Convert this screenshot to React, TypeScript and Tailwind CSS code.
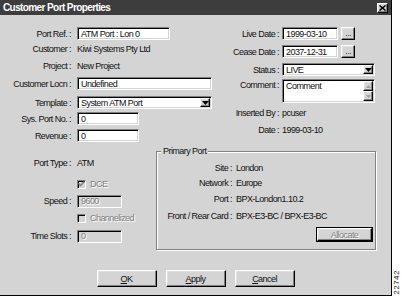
import React from "react";

const sunken =
  "border border-t-[#808080] border-l-[#808080] border-r-white border-b-white shadow-[inset_1px_1px_0_#000,inset_-1px_-1px_0_#d4d4d4]";
const raised =
  "border border-t-white border-l-white border-r-black border-b-black shadow-[inset_-1px_-1px_0_#808080,inset_1px_1px_0_#dfdfdf]";
const dim = "text-[#808080] [text-shadow:1px_1px_0_#fff]";

const Down = () => (
  <svg width="7" height="4" viewBox="0 0 7 4">
    <path d="M0 0h7L3.5 4z" fill="#000" />
  </svg>
);

const Field = ({ w, value, disabled }: any) => (
  <div
    className={`h-[13px] ${w} ${sunken} ${
      disabled ? "bg-[#d4d4d4] " + dim : "bg-white"
    } flex items-center pl-[3px] overflow-hidden whitespace-nowrap`}
  >
    {value}
  </div>
);

const Select = ({ w, value }: any) => (
  <div className={`h-[13px] ${w} ${sunken} bg-white flex items-stretch p-[1px]`}>
    <span className="flex-1 flex items-center pl-[2px]">{value}</span>
    <span className={`w-[10px] ${raised} bg-[#d4d4d4] flex items-center justify-center`}>
      <Down />
    </span>
  </div>
);

const Dots = () => (
  <div className={`h-[13px] w-[14px] ${raised} bg-[#d4d4d4] flex items-end justify-center gap-[1px] pb-[3px]`}>
    <span className="w-[1px] h-[1px] bg-[#505050]" />
    <span className="w-[1px] h-[1px] bg-[#505050]" />
    <span className="w-[1px] h-[1px] bg-[#505050]" />
  </div>
);

const Check = ({ checked, label }: any) => (
  <div className="flex items-center gap-[4px]">
    <span className={`w-[9px] h-[9px] ${sunken} bg-[#d4d4d4] flex items-center justify-center`}>
      {checked && (
        <svg width="7" height="6" viewBox="0 0 7 6">
          <path d="M0.5 2.5l2 2 4-4" stroke="#808080" strokeWidth="1.4" fill="none" />
        </svg>
      )}
    </span>
    <span className={dim}>{label}</span>
  </div>
);

const L = ({ w, children }: any) => (
  <span className={`${w} shrink-0 text-right whitespace-nowrap`}>{children}</span>
);

const Btn = ({ children }: any) => (
  <div className={`w-[60px] h-[17px] ${raised} bg-[#d4d4d4] flex items-center justify-center`}>
    {children}
  </div>
);

export default function App() {
  return (
    <div className="w-[402px] h-[298px] bg-white flex text-[#111] text-[9px] leading-[12px] tracking-[-0.55px] [font-family:'Liberation_Sans',Arial,sans-serif]">
      <div className="w-[392px] h-[296px] shrink-0 bg-[#d4d4d4] border-r border-b border-black flex flex-col">
        <div className="h-[15px] bg-[#3d3d3d] flex items-center justify-between pl-[3px] pr-[3px]">
          <span className="text-white font-bold text-[10px] tracking-[-0.6px]">Customer Port Properties</span>
          <span className={`w-[11px] h-[10px] ${raised} bg-[#d4d4d4] flex items-center justify-center`}>
            <svg width="7" height="6" viewBox="0 0 7 6">
              <path d="M0.5 0.5l6 5M6.5 0.5l-6 5" stroke="#000" strokeWidth="1.6" />
            </svg>
          </span>
        </div>

        <div className="flex mt-[12px]">
          <div className="w-[215px] shrink-0 flex flex-col">
            <div className="flex items-center gap-[6px] h-[13px]">
              <L w="w-[71px]">Port Ref. :</L>
              <Field w="w-[93px]" value="ATM Port : Lon 0" />
            </div>
            <div className="flex items-center gap-[6px] h-[13px] mt-[2px]">
              <L w="w-[71px]">Customer :</L>
              <span>Kiwi Systems Pty Ltd</span>
            </div>
            <div className="flex items-center gap-[6px] h-[13px] mt-[4px]">
              <L w="w-[71px]">Project :</L>
              <span>New Project</span>
            </div>
            <div className="flex items-center gap-[6px] h-[13px] mt-[5px]">
              <L w="w-[71px]">Customer Locn :</L>
              <Field w="w-[135px]" value="Undefined" />
            </div>
            <div className="flex items-center gap-[6px] h-[13px] mt-[6px]">
              <L w="w-[71px]">Template :</L>
              <Select w="w-[135px]" value="System ATM Port" />
            </div>
            <div className="flex items-center gap-[6px] h-[13px] mt-[3px]">
              <L w="w-[71px]">Sys. Port No. :</L>
              <Field w="w-[62px]" value="0" />
            </div>
            <div className="flex items-center gap-[6px] h-[13px] mt-[4px]">
              <L w="w-[71px]">Revenue :</L>
              <Field w="w-[62px]" value="0" />
            </div>
          </div>

          <div className="flex flex-col">
            <div className="flex items-center gap-[3px] h-[13px]">
              <L w="w-[64px]">Live Date :</L>
              <Field w="w-[56px]" value="1999-03-10" />
              <Dots />
            </div>
            <div className="flex items-center gap-[3px] h-[13px] mt-[5px]">
              <L w="w-[64px]">Cease Date :</L>
              <Field w="w-[56px]" value="2037-12-31" />
              <Dots />
            </div>
            <div className="flex items-center gap-[3px] h-[13px] mt-[5px]">
              <L w="w-[64px]">Status :</L>
              <Select w="w-[93px]" value="LIVE" />
            </div>
            <div className="flex items-start gap-[3px] mt-[3px]">
              <L w="w-[64px]">Comment :</L>
              <div className={`w-[93px] h-[24px] ${sunken} bg-white flex p-[1px]`}>
                <span className="flex-1 pl-[2px] leading-[11px]">Comment</span>
                <div className="w-[10px] flex flex-col">
                  {[0, 1].map((i) => (
                    <span key={i} className={`flex-1 ${raised} bg-[#d4d4d4] flex items-center justify-center`}>
                      <svg width="5" height="3" viewBox="0 0 5 3" className={i === 0 ? "rotate-180" : ""}>
                        <path d="M0 0h5L2.5 3z" fill="#a0a0a0" />
                      </svg>
                    </span>
                  ))}
                </div>
              </div>
            </div>
            <div className="flex items-center gap-[3px] h-[12px] mt-[4px]">
              <L w="w-[64px]">Inserted By :</L>
              <span>pcuser</span>
            </div>
            <div className="flex items-center gap-[3px] h-[12px] mt-[5px]">
              <L w="w-[64px]">Date :</L>
              <span>1999-03-10</span>
            </div>
          </div>
        </div>

        <div className="flex mt-[4px]">
          <div className="w-[156px] shrink-0 flex flex-col">
            <div className="flex items-center gap-[6px] h-[12px] mt-[11px]">
              <L w="w-[71px]">Port Type :</L>
              <span>ATM</span>
            </div>
            <div className="flex items-center h-[12px] mt-[9px] pl-[77px]">
              <Check checked label="DCE" />
            </div>
            <div className="flex items-center gap-[6px] h-[12px] mt-[5px]">
              <L w="w-[71px]">Speed :</L>
              <Field w="w-[45px]" value="9600" disabled />
            </div>
            <div className="flex items-center h-[12px] mt-[5px] pl-[77px]">
              <Check label="Channelized" />
            </div>
            <div className="flex items-center gap-[6px] h-[12px] mt-[6px]">
              <L w="w-[71px]">Time Slots :</L>
              <Field w="w-[45px]" value="0" disabled />
            </div>
          </div>

          <fieldset className="w-[220px] h-[104px] m-0 p-0 min-w-0 border border-[#808080] shadow-[inset_1px_1px_0_#fff,1px_1px_0_#fff] flex flex-col">
            <legend className="ml-[4px] px-[2px] bg-[#d4d4d4] leading-[11px]">Primary Port</legend>
            {[
              ["Site :", "London", "mt-[5px]"],
              ["Network :", "Europe", "mt-[3px]"],
              ["Port :", "BPX-London1.10.2", "mt-[4px]"],
              ["Front / Rear Card :", "BPX-E3-BC / BPX-E3-BC", "mt-[5px]"],
            ].map(([k, v, mt]) => (
              <div key={k} className={`flex items-center gap-[4px] h-[12px] ${mt}`}>
                <L w="w-[75px]">{k}</L>
                <span className="whitespace-nowrap">{v}</span>
              </div>
            ))}
            <div className="self-end mr-[2px] mt-[5px] w-[57px] h-[15px] border border-black">
              <div className={`w-full h-full ${raised} bg-[#d4d4d4] flex items-center justify-center ${dim}`}>
                Allocate
              </div>
            </div>
          </fieldset>
        </div>

        <div className="flex justify-center gap-[9px] mt-[20px]">
          <Btn>
            <span><u>O</u>K</span>
          </Btn>
          <Btn>
            <span><u>A</u>pply</span>
          </Btn>
          <Btn>
            <span><u>C</u>ancel</span>
          </Btn>
        </div>
      </div>

      <div className="flex-1 flex items-end justify-center pb-[3px]">
        <span className="[writing-mode:vertical-rl] rotate-180 text-[8px] leading-[8px] tracking-[0.5px]">
          22742
        </span>
      </div>
    </div>
  );
}
